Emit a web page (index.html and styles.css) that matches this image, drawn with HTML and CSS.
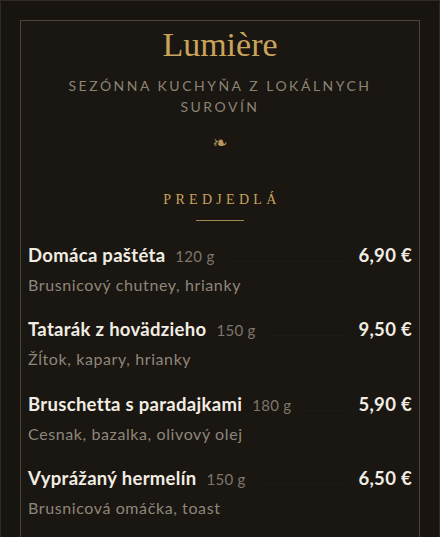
FILE: index.html
```html
<!DOCTYPE html>
<html lang="sk">
<head>
<meta charset="utf-8">
<title>Lumière</title>
<link rel="stylesheet" href="styles.css">
</head>
<body>
<div class="page">
  <main class="card">
    <header class="head">
      <h1 class="title">Lumière</h1>
      <p class="subtitle">Sezónna kuchyňa z lokálnych surovín</p>
      <div class="fleuron">❧</div>
    </header>
    <section class="section">
      <h2 class="section-title">Predjedlá</h2>
      <div class="rule"></div>
      <ul class="items">
        <li class="item">
          <div class="row">
            <span class="name">Domáca paštéta</span>
            <span class="weight">120 g</span>
            <span class="leader"></span>
            <span class="price">6,90 €</span>
          </div>
          <p class="desc">Brusnicový chutney, hrianky</p>
        </li>
        <li class="item">
          <div class="row">
            <span class="name">Tatarák z hovädzieho</span>
            <span class="weight">150 g</span>
            <span class="leader"></span>
            <span class="price">9,50 €</span>
          </div>
          <p class="desc">Žĺtok, kapary, hrianky</p>
        </li>
        <li class="item">
          <div class="row">
            <span class="name">Bruschetta s paradajkami</span>
            <span class="weight">180 g</span>
            <span class="leader"></span>
            <span class="price">5,90 €</span>
          </div>
          <p class="desc">Cesnak, bazalka, olivový olej</p>
        </li>
        <li class="item">
          <div class="row">
            <span class="name">Vyprážaný hermelín</span>
            <span class="weight">150 g</span>
            <span class="leader"></span>
            <span class="price">6,50 €</span>
          </div>
          <p class="desc">Brusnicová omáčka, toast</p>
        </li>
      </ul>
    </section>
  </main>
</div>
</body>
</html>
```

FILE: styles.css
```css
html, body {
  margin: 0;
  padding: 0;
  background: #181511;
  overflow: hidden;
}
body {
  font-family: "Lato", "Liberation Sans", sans-serif;
  color: #f2ede2;
}
.page {
  box-sizing: border-box;
  width: 440px;
  height: 537px;
  overflow: hidden;
  border: 1px solid #2f2b23;
  border-bottom: none;
  padding: 19px 19px 0;
}
.card {
  border: 1px solid #4a4536;
  border-bottom: none;
  background: #1a1612;
  padding: 0 7px 30px;
  min-height: 600px;
}
.head {
  text-align: center;
  padding-top: 6px;
}
.title {
  margin: 0;
  font-family: "Liberation Serif", "DejaVu Serif", serif;
  font-weight: 400;
  font-size: 34px;
  line-height: 36px;
  color: #c9a45c;
}
.subtitle {
  margin: 12px auto 0;
  width: 320px;
  font-size: 14px;
  line-height: 21px;
  letter-spacing: 2.5px;
  text-transform: uppercase;
  color: #8b8474;
}
.fleuron {
  margin-top: 18px;
  font-family: "DejaVu Sans", serif;
  font-size: 18px;
  line-height: 16px;
  color: #b8975a;
}
.section {
  margin-top: 40px;
  text-align: center;
}
.section-title {
  margin: 0;
  font-family: "Liberation Serif", "DejaVu Serif", serif;
  font-weight: 400;
  font-size: 14px;
  line-height: 18px;
  letter-spacing: 4.3px;
  text-transform: uppercase;
  color: #c9a45c;
  padding-left: 4px;
}
.rule {
  width: 48px;
  height: 1px;
  background: #a38654;
  margin: 11px auto 0;
}
.items {
  list-style: none;
  margin: 22px 0 0;
  padding: 0;
  text-align: left;
}
.item {
  margin-bottom: 22.33px;
}
.row {
  display: flex;
  align-items: baseline;
}
.name {
  font-weight: 700;
  font-size: 18.5px;
  letter-spacing: 0.3px;
  line-height: 24px;
  color: #f2ede2;
}
.weight {
  margin-left: 10px;
  font-size: 15px;
  letter-spacing: 0.3px;
  color: #7d776a;
}
.leader {
  flex: 1;
  margin: 0 12px;
  border-bottom: 1px solid rgba(120, 110, 90, 0.05);
}
.price {
  font-weight: 700;
  font-size: 18.5px;
  letter-spacing: 0.3px;
  color: #f2ede2;
}
.desc {
  margin: 8px 0 0;
  font-size: 16px;
  letter-spacing: 0.6px;
  line-height: 20px;
  color: #8e877a;
}
```
